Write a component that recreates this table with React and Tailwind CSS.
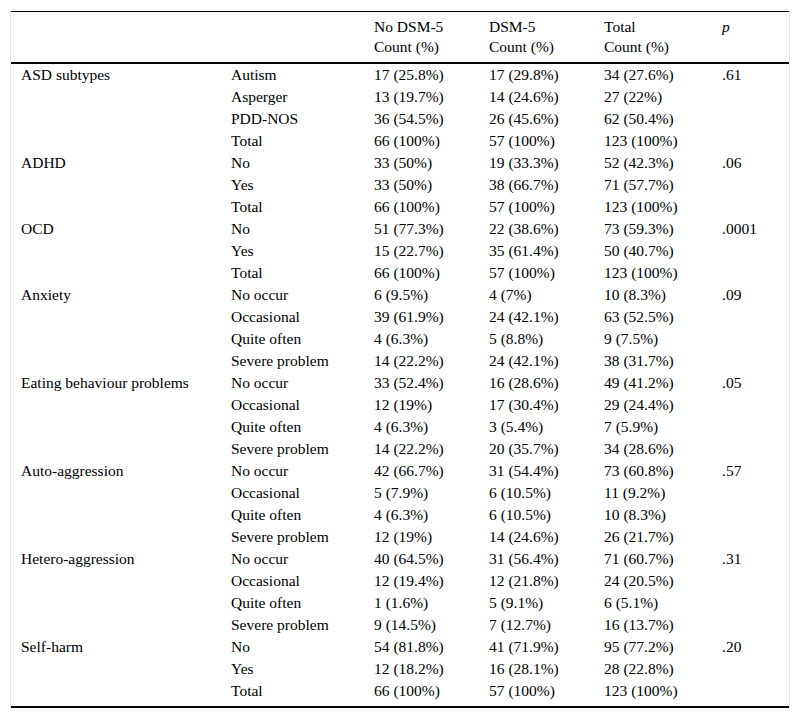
const groups = [
  { label: 'ASD subtypes', p: '.61', rows: [
    ['Autism', '17 (25.8%)', '17 (29.8%)', '34 (27.6%)'],
    ['Asperger', '13 (19.7%)', '14 (24.6%)', '27 (22%)'],
    ['PDD-NOS', '36 (54.5%)', '26 (45.6%)', '62 (50.4%)'],
    ['Total', '66 (100%)', '57 (100%)', '123 (100%)'],
  ] },
  { label: 'ADHD', p: '.06', rows: [
    ['No', '33 (50%)', '19 (33.3%)', '52 (42.3%)'],
    ['Yes', '33 (50%)', '38 (66.7%)', '71 (57.7%)'],
    ['Total', '66 (100%)', '57 (100%)', '123 (100%)'],
  ] },
  { label: 'OCD', p: '.0001', rows: [
    ['No', '51 (77.3%)', '22 (38.6%)', '73 (59.3%)'],
    ['Yes', '15 (22.7%)', '35 (61.4%)', '50 (40.7%)'],
    ['Total', '66 (100%)', '57 (100%)', '123 (100%)'],
  ] },
  { label: 'Anxiety', p: '.09', rows: [
    ['No occur', '6 (9.5%)', '4 (7%)', '10 (8.3%)'],
    ['Occasional', '39 (61.9%)', '24 (42.1%)', '63 (52.5%)'],
    ['Quite often', '4 (6.3%)', '5 (8.8%)', '9 (7.5%)'],
    ['Severe problem', '14 (22.2%)', '24 (42.1%)', '38 (31.7%)'],
  ] },
  { label: 'Eating behaviour problems', p: '.05', rows: [
    ['No occur', '33 (52.4%)', '16 (28.6%)', '49 (41.2%)'],
    ['Occasional', '12 (19%)', '17 (30.4%)', '29 (24.4%)'],
    ['Quite often', '4 (6.3%)', '3 (5.4%)', '7 (5.9%)'],
    ['Severe problem', '14 (22.2%)', '20 (35.7%)', '34 (28.6%)'],
  ] },
  { label: 'Auto-aggression', p: '.57', rows: [
    ['No occur', '42 (66.7%)', '31 (54.4%)', '73 (60.8%)'],
    ['Occasional', '5 (7.9%)', '6 (10.5%)', '11 (9.2%)'],
    ['Quite often', '4 (6.3%)', '6 (10.5%)', '10 (8.3%)'],
    ['Severe problem', '12 (19%)', '14 (24.6%)', '26 (21.7%)'],
  ] },
  { label: 'Hetero-aggression', p: '.31', rows: [
    ['No occur', '40 (64.5%)', '31 (56.4%)', '71 (60.7%)'],
    ['Occasional', '12 (19.4%)', '12 (21.8%)', '24 (20.5%)'],
    ['Quite often', '1 (1.6%)', '5 (9.1%)', '6 (5.1%)'],
    ['Severe problem', '9 (14.5%)', '7 (12.7%)', '16 (13.7%)'],
  ] },
  { label: 'Self-harm', p: '.20', rows: [
    ['No', '54 (81.8%)', '41 (71.9%)', '95 (77.2%)'],
    ['Yes', '12 (18.2%)', '16 (28.1%)', '28 (22.8%)'],
    ['Total', '66 (100%)', '57 (100%)', '123 (100%)'],
  ] },
]

const cols = 'grid grid-cols-[210px_143px_115px_115px_118px_77px]'

export default function App() {
  return (
    <div className="min-h-[719px] bg-white pt-[10px] pl-[10px] font-['Liberation_Serif',serif] text-[15.5px] text-black">
      <div className="w-[780px] border-x border-[#e4e4e4] pt-px">
        <div className="border-t border-black">
          {/* Header */}
          <div className={`${cols} border-b-2 border-black pt-[5px] pb-[5px] leading-[20px]`}>
            <div />
            <div />
            <div className="pl-[10px]">No DSM-5<br />Count (%)</div>
            <div className="pl-[10px]">DSM-5<br />Count (%)</div>
            <div className="pl-[10px]">Total<br />Count (%)</div>
            <div className="pl-[10px] italic">p</div>
          </div>

          {/* Body */}
          <div className="pb-[4px] leading-[22px]">
            {groups.map(g =>
              g.rows.map((r, i) => (
                <div key={g.label + i} className={cols}>
                  <div className="pl-[10px]">{i === 0 ? g.label : ''}</div>
                  {r.map((c, j) => (
                    <div key={j} className="pl-[10px] whitespace-nowrap">{c}</div>
                  ))}
                  <div className="pl-[10px]">{i === 0 ? g.p : ''}</div>
                </div>
              ))
            )}
          </div>
          <div className="border-b-2 border-black" />
        </div>
      </div>
    </div>
  )
}
